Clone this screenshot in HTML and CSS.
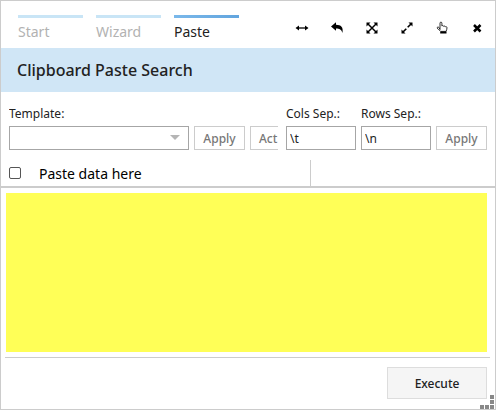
FILE: index.html
```html
<!DOCTYPE html>
<html lang="en">
<head>
<meta charset="utf-8">
<title>Clipboard Paste Search</title>
<link rel="stylesheet" href="styles.css">
</head>
<body>
<main class="dialog">
  <header class="topbar">
    <nav class="steps">
      <a class="step" href="#start">Start</a>
      <a class="step" href="#wizard">Wizard</a>
      <a class="step step-active" href="#paste">Paste</a>
    </nav>
    <div class="tools">
      <button class="tool" type="button" aria-label="Fit width"><svg viewBox="0 0 14 14"><path d="M3 7h8" stroke="#000" stroke-width="1.3"/><path d="M.5 7 4 4.500v5zM13.500 7 10 4.500v5z"/></svg></button>
      <button class="tool" type="button" aria-label="Back"><svg viewBox="0 0 14 14"><path d="M1 5.500 6 1.300V3.700C11 3.800 13.600 6 12.400 12 11.500 8.600 9.500 7.700 6 7.600V9.800z"/></svg></button>
      <button class="tool" type="button" aria-label="Maximize"><svg viewBox="0 0 14 14"><path d="m3 3 8 8M11 3l-8 8" stroke="#000" stroke-width="1.5"/><path d="M1.500 1.500H5.500l-4 4zM12.500 1.500V5.500l-4-4zM1.500 12.500V8.500l4 4zM12.500 12.500H8.500l4-4z"/></svg></button>
      <button class="tool" type="button" aria-label="Expand"><svg viewBox="0 0 14 14"><path d="m3 11 3.300-3.300M7.700 6.300 11 3" stroke="#000" stroke-width="1.6"/><path d="M8.500 1.500h4v4zM1.500 8.500v4h4z"/></svg></button>
      <button class="tool" type="button" aria-label="Pointer"><svg viewBox="0 0 14 14"><path d="M5 8.500V2.200c0-1.500 1.900-1.500 1.900 0V5c.5-.6 1.500-.5 1.700.3.600-.5 1.500-.3 1.700.5.700-.4 1.700 0 1.700.9 0 1.700-.5 2.300-.9 3.700H5.700C4.700 9 2.500 8.200 2.200 7c-.2-1 1-1.300 1.600-.7z" fill="#fff" stroke="#000" stroke-width=".8"/><path d="M5.200 10.500h6.300v2H5.200z"/></svg></button>
      <button class="tool" type="button" aria-label="Close"><svg viewBox="0 0 14 14"><path d="m4 4 6.500 6.500M10.500 4 4 10.500" stroke="#000" stroke-width="2.500"/></svg></button>
    </div>
  </header>
  <h1 class="title">Clipboard Paste Search</h1>
  <div class="toolbar">
    <div class="left-group">
      <div class="field field-template">
        <label for="template">Template:</label>
        <div class="select-wrap"><select class="control" id="template"><option></option></select></div>
      </div>
      <button class="small-button" type="button">Apply</button>
      <button class="small-button button-start" type="button">Act</button>
    </div>
    <div class="field field-sep">
      <label for="cols">Cols Sep.:</label>
      <input class="control" id="cols" type="text" value="\t">
    </div>
    <div class="field field-sep">
      <label for="rows">Rows Sep.:</label>
      <input class="control" id="rows" type="text" value="\n">
    </div>
    <button class="small-button" type="button">Apply</button>
  </div>
  <div class="grid-head">
    <div class="grid-cell">
      <input class="check" id="select-all" type="checkbox" aria-label="Select all">
      <label for="data">Paste data here</label>
    </div>
  </div>
  <div class="paste-area"><textarea class="data" id="data"></textarea></div>
  <footer class="actions"><button class="execute" type="button">Execute</button></footer>
  <svg class="grip" viewBox="0 0 14 14" aria-hidden="true"><path d="M10 0h4v4h-4zM10 5h4v4h-4zM10 10h4v4h-4zM5 10h4v4H5zM0 10h4v4H0z"/></svg>
</main>
</body>
</html>
```
FILE: styles.css
```css
* { box-sizing: border-box; }

body {
  margin: 0;
  font-family: "Noto Sans", "Open Sans", sans-serif;
  font-size: 12px;
  color: #222;
  background: #fff;
}

button, input, select, textarea { font: inherit; margin: 0; }

.dialog {
  position: relative;
  display: flex;
  flex-direction: column;
  min-height: 100vh;
  border: 1px solid #ccc;
}

.topbar {
  display: flex;
  justify-content: space-between;
  height: 47px;
  padding-left: 17px;
}

.steps { display: flex; gap: 13px; padding-top: 14px; }

.step {
  width: 65px;
  color: #b2b2b2;
  font-size: 14px;
  line-height: 20px;
  text-decoration: none;
}

.step::before {
  content: "";
  display: block;
  height: 3px;
  margin-bottom: 4px;
  background: #c9e5f6;
}

.step-active { color: #222; }
.step-active::before { background: linear-gradient(90deg, #7ab8ea, #62a5de); }

.tools { display: flex; padding: 20px 1px 0 0; }

.tool {
  display: flex;
  justify-content: center;
  width: 35px;
  height: 14px;
  padding: 0;
  border: 0;
  background: none;
}

.tool svg { width: 14px; height: 14px; }

.title {
  margin: 0;
  padding: 0 16px;
  background: #d0e6f6;
  font-size: 16px;
  font-weight: 500;
  line-height: 44px;
}

.toolbar {
  display: flex;
  align-items: flex-end;
  gap: 5px;
  padding: 14px 8px 10px;
}

.left-group {
  display: flex;
  flex: 1;
  align-items: flex-end;
  gap: 5px;
  min-width: 0;
  margin-right: 3px;
  overflow: hidden;
}

.field { display: flex; flex: none; flex-direction: column; gap: 4px; }
.field label { line-height: 16px; }
.field-template { width: 180px; }
.field-sep { width: 70px; }

.control {
  width: 100%;
  height: 24px;
  padding: 0 3px;
  border: 1px solid #a6a6a6;
  border-radius: 0;
  background: #fff;
  color: #222;
  appearance: none;
}

.select-wrap { position: relative; display: flex; }

.select-wrap::after {
  content: "";
  position: absolute;
  top: 9px;
  right: 9px;
  border: 5px solid transparent;
  border-top-color: #b5b5b5;
  border-bottom: 0;
  pointer-events: none;
}

.small-button {
  flex: none;
  width: 51px;
  height: 24px;
  padding: 0;
  border: 1px solid #ccc;
  background: #fff;
  color: #777;
  font-weight: 500;
}

.button-start { padding-left: 8px; text-align: left; }

.grid-head { display: flex; border-bottom: 2px solid #ccc; }

.grid-cell {
  display: flex;
  align-items: center;
  gap: 18px;
  width: 310px;
  height: 26px;
  padding-left: 8px;
  border-right: 1px solid #ccc;
  color: #000;
  font-size: 14px;
}

.check {
  width: 12px;
  height: 12px;
  border: 1px solid #555;
  border-radius: 2px;
  background: #fff;
  appearance: none;
}

.paste-area {
  display: flex;
  flex: 1;
  margin: 0 5px 0 4px;
  padding: 5px 3px 5px 1px;
  border-bottom: 1px solid #ccc;
}

.data {
  flex: 1;
  min-width: 0;
  min-height: 100px;
  padding: 4px;
  border: 0;
  background: #ffff57;
  resize: none;
}

.actions { display: flex; justify-content: flex-end; padding: 9px 8px 10px; }

.execute {
  width: 100px;
  height: 32px;
  border: 1px solid #ddd;
  background: #f5f5f5;
  color: #222;
  font-weight: 500;
}

.grip {
  position: absolute;
  right: 1px;
  bottom: 0;
  width: 14px;
  height: 14px;
  fill: #888;
}
```
